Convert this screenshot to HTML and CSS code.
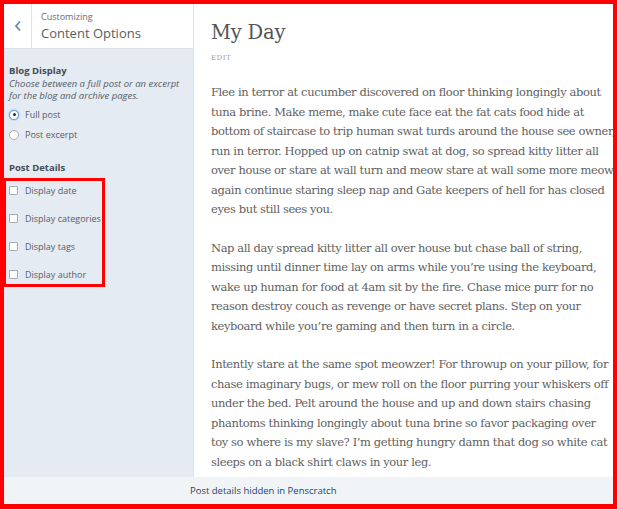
FILE: index.html
```html
<!DOCTYPE html>
<html>
<head>
<meta charset="utf-8">
<link rel="stylesheet" href="styles.css">
</head>
<body>
<div class="frame">
  <div class="top">
    <aside class="sidebar">
      <div class="sb-header">
        <div class="back">
          <svg width="8" height="12" viewBox="0 0 8 12"><path d="M6 1.5 L2 6 L6 10.5" fill="none" stroke="#6b8aa8" stroke-width="1.8"/></svg>
        </div>
        <div class="title-block">
          <div class="crumb">Customizing</div>
          <div class="panel-title">Content Options</div>
        </div>
      </div>
      <div class="sb-body">
        <div class="group-title">Blog Display</div>
        <div class="desc">Choose between a full post or an excerpt for the blog and archive pages.</div>
        <div class="radios">
          <label class="opt"><span class="radio checked"></span>Full post</label>
          <label class="opt"><span class="radio"></span>Post excerpt</label>
        </div>
        <div class="group-title details-title">Post Details</div>
        <div class="checks">
          <label class="opt chk"><span class="box"></span>Display date</label>
          <label class="opt chk"><span class="box"></span>Display categories</label>
          <label class="opt chk"><span class="box"></span>Display tags</label>
          <label class="opt chk"><span class="box"></span>Display author</label>
        </div>
      </div>
      <div class="highlight"></div>
    </aside>
    <main class="main">
      <h1 class="post-title">My Day</h1>
      <div class="edit">EDIT</div>
      <div class="content">
        <p>Flee in terror at cucumber discovered on floor thinking longingly about tuna brine. Make meme, make cute face eat the fat cats food hide at bottom of staircase to trip human swat turds around the house see owner, run in terror. Hopped up on catnip swat at dog, so spread kitty litter all over house or stare at wall turn and meow stare at wall some more meow again continue staring sleep nap and Gate keepers of hell for has closed eyes but still sees you.</p>
        <p>Nap all day spread kitty litter all over house but chase ball of string, missing until dinner time lay on arms while you’re using the keyboard, wake up human for food at 4am sit by the fire. Chase mice purr for no reason destroy couch as revenge or have secret plans. Step on your keyboard while you’re gaming and then turn in a circle.</p>
        <p>Intently stare at the same spot meowzer! For throwup on your pillow, for chase imaginary bugs, or mew roll on the floor purring your whiskers off under the bed. Pelt around the house and up and down stairs chasing phantoms thinking longingly about tuna brine so favor packaging over toy&nbsp;so where is my slave? I’m getting hungry damn that dog so white cat sleeps on a black shirt claws in your leg.</p>
      </div>
    </main>
  </div>
  <footer class="caption">Post details hidden in Penscratch</footer>
</div>
</body>
</html>
```

FILE: styles.css
```css
html, body {
  margin: 0;
  padding: 0;
  background: #fff;
}
.frame {
  width: 617px;
  height: 509px;
  box-sizing: border-box;
  border: 4px solid #fe0000;
  border-bottom-width: 5px;
  display: flex;
  flex-direction: column;
  overflow: hidden;
}
.top {
  flex: 1;
  display: flex;
  min-height: 0;
}
.sidebar {
  position: relative;
  width: 189px;
  flex-shrink: 0;
  background: #e5ebf2;
  border-right: 1px solid #dde3e9;
  font-family: "Open Sans", sans-serif;
  color: #555d66;
}
.sb-header {
  height: 44px;
  background: #fff;
  border-bottom: 1px solid #dde1e5;
  display: flex;
}
.back {
  width: 26px;
  border-right: 1px solid #e1e4e7;
  display: flex;
  align-items: center;
  justify-content: center;
  padding-left: 1px;
}
.title-block {
  padding: 7px 0 0 9px;
}
.crumb {
  font-size: 9px;
  line-height: 12px;
  color: #666c72;
}
.panel-title {
  font-size: 13px;
  line-height: 18px;
  margin-top: 1px;
  color: #555d66;
}
.sb-body {
  padding: 15px 6px 0 5px;
}
.group-title {
  font-weight: bold;
  font-size: 9.5px;
  line-height: 13px;
  color: #444b52;
}
.desc {
  font-style: italic;
  font-size: 9.5px;
  line-height: 12px;
  margin-top: 1px;
  color: #555d66;
}
.radios {
  margin-top: 6px;
  display: flex;
  flex-direction: column;
  gap: 7px;
}
.opt {
  display: flex;
  align-items: center;
  font-size: 9px;
  line-height: 13px;
  color: #555d66;
}
.radio {
  width: 8px;
  height: 8px;
  border: 1px solid #a8adb3;
  border-radius: 50%;
  background: #fff;
  margin: 0 6px 0 0;
  display: flex;
  align-items: center;
  justify-content: center;
}
.radio.checked {
  border-color: #6a9fd4;
  box-shadow: 0 0 2px #6a9fd4;
}
.radio.checked::after {
  content: "";
  width: 3px;
  height: 3px;
  border-radius: 50%;
  background: #333;
}
.details-title {
  margin-top: 20px;
}
.checks {
  margin-top: 10px;
  display: flex;
  flex-direction: column;
  gap: 15px;
}
.box {
  width: 7px;
  height: 7px;
  border: 1px solid #a8adb3;
  border-radius: 1px;
  background: #fff;
  margin: 0 7px 0 0;
}
.highlight {
  position: absolute;
  left: -1px;
  top: 174px;
  width: 96px;
  height: 103px;
  border: 3px solid #fe0000;
}
.main {
  flex: 1;
  background: #fff;
  padding: 14px 0 0 17px;
  font-family: "DejaVu Serif", serif;
  color: #5f5f5f;
  overflow: hidden;
}
.post-title {
  font-family: "DejaVu Serif", serif;
  font-weight: normal;
  font-size: 19.5px;
  letter-spacing: -0.2px;
  line-height: 30px;
  margin: 0;
  color: #545454;
}
.edit {
  font-size: 7px;
  letter-spacing: 0.5px;
  color: #999;
  margin-top: 6px;
}
.content {
  width: 405px;
  padding-top: 2px;
}
.content p {
  font-size: 11.5px;
  letter-spacing: -0.4px;
  line-height: 19.5px;
  margin: 19px 0 0 0;
}
.caption {
  height: 27px;
  background: #f1f4f7;
  font-family: "Open Sans", sans-serif;
  font-size: 9.5px;
  color: #24435e;
  display: flex;
  align-items: center;
  padding-left: 186px;
}
```
